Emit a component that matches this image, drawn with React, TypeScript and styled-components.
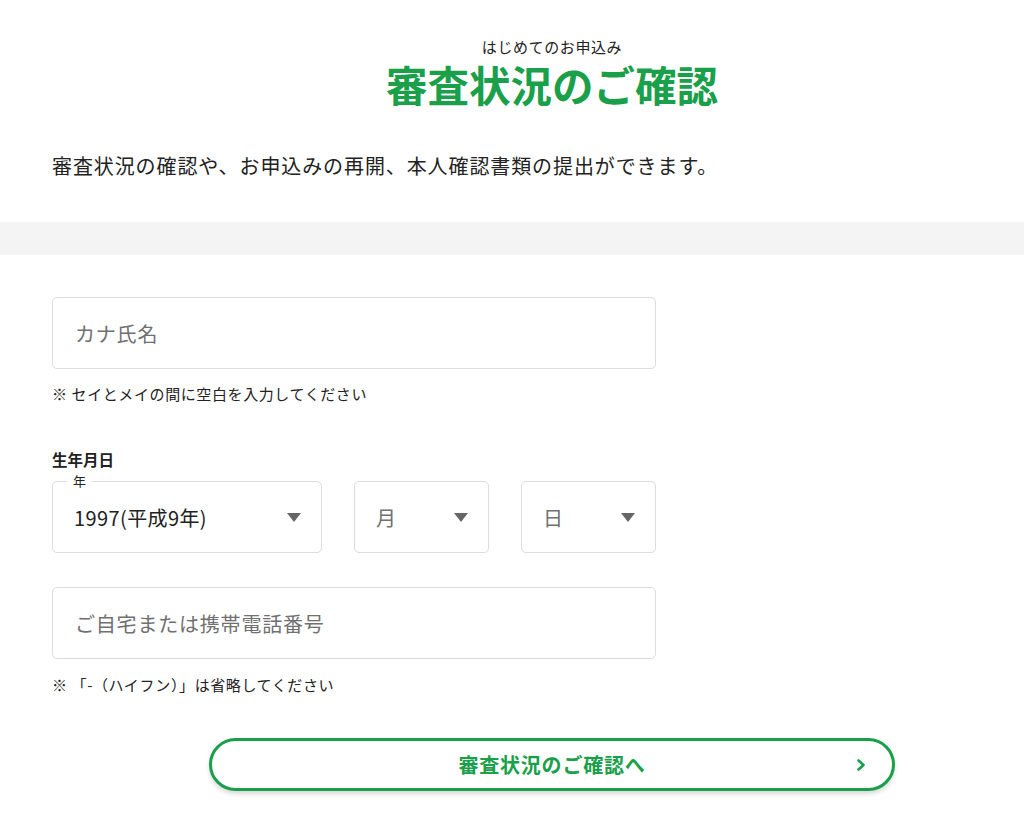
import React from "react";
import styled, { createGlobalStyle } from "styled-components";

const GREEN = "#1a9f4a";
const FONT = `"Noto Sans CJK JP", "Noto Sans", sans-serif`;

const Global = createGlobalStyle`
  html, body { margin: 0; padding: 0; background: #fff; }
  body { font-family: ${FONT}; color: #222; }
  * { box-sizing: border-box; }
`;

const Page = styled.div`
  width: 1024px;
  min-height: 817px;
  background: #fff;
  display: flex;
  flex-direction: column;
`;

const Header = styled.header`
  display: flex;
  flex-direction: column;
  align-items: center;
  padding: 37px 0 0 80px;
`;

const SubTitle = styled.div`
  font-size: 15px;
  line-height: 20px;
  letter-spacing: 0.04em;
  color: #222;
`;

const Title = styled.h1`
  margin: 5px 0 0;
  font-size: 41.5px;
  line-height: 44px;
  font-weight: 700;
  color: ${GREEN};
  letter-spacing: 0;
`;

const Lead = styled.p`
  margin: 45px 0 0 52px;
  font-size: 20px;
  line-height: 30px;
  letter-spacing: 0.045em;
  color: #222;
`;

const Band = styled.div`
  margin-top: 41px;
  height: 33px;
  background: #f4f4f4;
`;

const Form = styled.form`
  padding: 42px 0 0 52px;
  width: 656px;
  display: flex;
  flex-direction: column;
`;

const TextBox = styled.div<{ $mt?: number }>`
  margin-top: ${(p) => p.$mt ?? 0}px;
  height: 72px;
  border: 1px solid #dcdcdc;
  border-radius: 5px;
  display: flex;
  align-items: center;
  padding-left: 22px;
  font-size: 20px;
  letter-spacing: 0.04em;
  color: #707070;
`;

const Note = styled.div<{ $mt: number }>`
  margin-top: ${(p) => p.$mt}px;
  font-size: 15px;
  line-height: 20px;
  letter-spacing: 0.04em;
  color: #222;
`;

const GroupLabel = styled.div`
  margin-top: 45px;
  font-size: 15.5px;
  line-height: 20px;
  font-weight: 700;
  color: #222;
`;

const SelectRow = styled.div`
  margin-top: 12px;
  display: flex;
  gap: 32px;
`;

const SelectBox = styled.div<{ $w: number; $filled?: boolean }>`
  position: relative;
  width: ${(p) => p.$w}px;
  height: 72px;
  border: 1px solid #dcdcdc;
  border-radius: 5px;
  display: flex;
  align-items: center;
  justify-content: space-between;
  padding: 0 20px 0 21px;
  font-size: 20px;
  letter-spacing: 0.02em;
  color: ${(p) => (p.$filled ? "#222" : "#707070")};
`;

const Legend = styled.span`
  position: absolute;
  left: 14px;
  top: -10px;
  padding: 0 6px;
  background: #fff;
  font-size: 13px;
  line-height: 18px;
  color: #222;
`;

const Arrow = styled.span`
  width: 0;
  height: 0;
  border-left: 7px solid transparent;
  border-right: 7px solid transparent;
  border-top: 9px solid #666;
`;

const ButtonWrap = styled.div`
  padding: 43px 0 0 209px;
`;

const Button = styled.button`
  width: 686px;
  height: 53px;
  border: 3px solid ${GREEN};
  border-radius: 27px;
  background: #fff;
  box-shadow: 0 3px 4px rgba(0, 0, 0, 0.15);
  display: grid;
  grid-template-columns: 1fr auto 1fr;
  align-items: center;
  padding: 0 26px;
  font-family: ${FONT};
  font-size: 20px;
  letter-spacing: 0.04em;
  font-weight: 700;
  color: ${GREEN};
  cursor: pointer;
`;

const Chevron = styled.svg`
  justify-self: end;
  width: 10px;
  height: 12px;
`;

export default function App() {
  return (
    <Page>
      <Global />
      <Header>
        <SubTitle>はじめてのお申込み</SubTitle>
        <Title>審査状況のご確認</Title>
      </Header>
      <Lead>審査状況の確認や、お申込みの再開、本人確認書類の提出ができます。</Lead>
      <Band />
      <Form>
        <TextBox>カナ氏名</TextBox>
        <Note $mt={15}>※ セイとメイの間に空白を入力してください</Note>
        <GroupLabel>生年月日</GroupLabel>
        <SelectRow>
          <SelectBox $w={270} $filled>
            <Legend>年</Legend>
            1997(平成9年)
            <Arrow />
          </SelectBox>
          <SelectBox $w={135}>
            月
            <Arrow />
          </SelectBox>
          <SelectBox $w={135}>
            日
            <Arrow />
          </SelectBox>
        </SelectRow>
        <TextBox $mt={34}>ご自宅または携帯電話番号</TextBox>
        <Note $mt={16}>※ 「-（ハイフン）」は省略してください</Note>
      </Form>
      <ButtonWrap>
        <Button type="button">
          <span />
          <span>審査状況のご確認へ</span>
          <Chevron viewBox="0 0 10 12">
            <path d="M2.5 1.5 L7.5 6 L2.5 10.5" fill="none" stroke={GREEN} strokeWidth="2.6" strokeLinecap="round" strokeLinejoin="round" />
          </Chevron>
        </Button>
      </ButtonWrap>
    </Page>
  );
}
